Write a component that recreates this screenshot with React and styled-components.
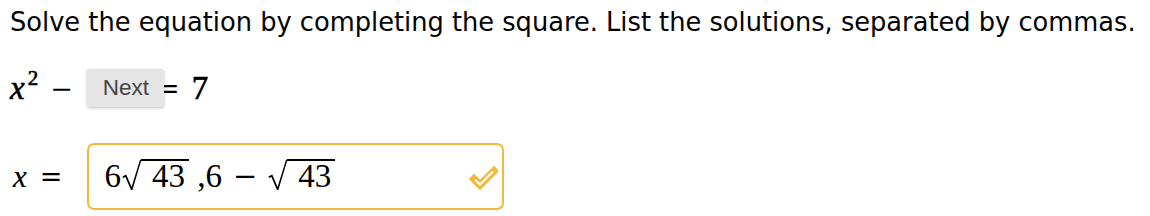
import styled, { createGlobalStyle } from 'styled-components';

const Global = createGlobalStyle`
    body {
        margin: 0;
        background: #ffffff;
        color: #000000;
    }
`;

const Page = styled.div`
    width: 1150px;
    height: 216px;
    padding: 0 0 0 10px;
    box-sizing: border-box;
    overflow: hidden;
`;

const Prompt = styled.p`
    margin: 0;
    padding-top: 6px;
    font-family: "DejaVu Sans", sans-serif;
    font-size: 25.7px;
    line-height: 32px;
    white-space: nowrap;
`;

const MathRow = styled.div`
    display: flex;
    align-items: center;
    height: ${p => p.$h}px;
    margin-top: ${p => p.$top}px;
    font-family: "Liberation Serif", serif;
    font-size: 33px;
`;

const Var = styled.span`
    font-family: "Liberation Serif", serif;
    font-style: italic;
    font-size: ${p => p.$size}px;
    padding-left: ${p => p.$pad || 0}px;
    -webkit-text-stroke: ${p => (p.$heavy ? '0.6px #000' : '0.2px #000')};
`;

const Sup = styled.sup`
    font-size: 21px;
    font-style: normal;
    vertical-align: 14px;
    line-height: 0;
    margin-left: 3px;
`;

const Op = styled.span`
    font-family: "DejaVu Serif", serif;
    font-size: 27px;
    margin: 0 ${p => p.$r}px 0 ${p => p.$l}px;
`;

const Number = styled.span`
    -webkit-text-stroke: 0.7px #000;
`;

const NextButton = styled.button`
    position: relative;
    z-index: 1;
    height: 38px;
    padding: 0 15px 0 16px;
    border: none;
    border-radius: 3px;
    background: #e5e5e5;
    box-shadow: 0 1px 3px rgba(0, 0, 0, 0.25);
    font-family: "Liberation Sans", Arial, sans-serif;
    font-size: 22.5px;
    color: #444444;
    cursor: pointer;
`;

const AnswerBox = styled.div`
    display: flex;
    align-items: center;
    justify-content: space-between;
    width: 417px;
    height: 67px;
    box-sizing: border-box;
    border: 2px solid #f3b83c;
    border-radius: 7px;
    padding: 0 4px 0 15px;
`;

const Expr = styled.span`
    display: inline-flex;
    align-items: flex-end;
    padding-bottom: 5px;
    line-height: 27px;
`;

const Radical = styled.span`
    display: inline-flex;
    align-items: stretch;
    margin-left: 1px;
`;

const Radicand = styled.span`
    border-top: 2px solid #000;
    padding: 2px 4px 0 11px;
`;

const Minus = styled.span`
    font-family: "DejaVu Serif", serif;
    font-size: 29px;
    margin: 0 10px 0 11px;
`;

function RootSign() {
    return (
        <svg width="19" height="31" viewBox="0 0 19 31">
            <path d="M0.5 17.5 L4.2 15.5 L9.6 28 L18 0.8 L19 0.8 L19 2.2 L10.4 31 L9 31 L3.4 18 L1 19 Z" fill="#000" />
        </svg>
    );
}

function Sqrt({ children }) {
    return (
        <Radical>
            <RootSign />
            <Radicand>{children}</Radicand>
        </Radical>
    );
}

function CheckMark() {
    return (
        <svg width="30" height="26" viewBox="0 0 30 26">
            <path d="M6 15 L12 21 L26 7" fill="none" stroke="#f3b83c" strokeWidth="7.5" strokeLinejoin="miter" strokeLinecap="square" />
            <path d="M7 15.5 L12 20.5 L25 7.5" fill="none" stroke="#ffffff" strokeWidth="2" />
        </svg>
    );
}

export default function App() {
    return (
        <Page>
            <Global />
            <Prompt>Solve the equation by completing the square. List the solutions, separated by commas.</Prompt>
            <MathRow $h={40} $top={30}>
                <Var $size={33} $heavy>x<Sup>2</Sup></Var>
                <Op $l={12} $r={14}>−</Op>
                <NextButton>Next</NextButton>
                <Op $l={-7} $r={12}>=</Op>
                <Number>7</Number>
            </MathRow>
            <MathRow $h={67} $top={35}>
                <Var $size={31} $pad={3}>x</Var>
                <Op $l={13} $r={25}>=</Op>
                <AnswerBox>
                    <Expr>
                        6<Sqrt>43</Sqrt>
                        <span>&nbsp;,6</span>
                        <Minus>−</Minus>
                        <Sqrt>43</Sqrt>
                    </Expr>
                    <CheckMark />
                </AnswerBox>
            </MathRow>
        </Page>
    );
}
